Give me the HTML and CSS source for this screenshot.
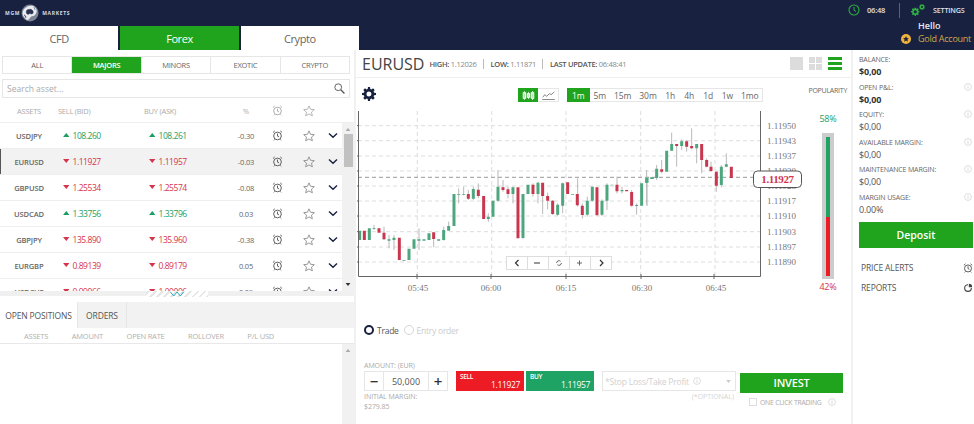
FILE: index.html
```html
<!DOCTYPE html>
<html lang="en">
<head>
<meta charset="utf-8">
<title>EURUSD</title>
<link rel="stylesheet" href="styles.css">
</head>
<body>
<svg class="sprite" aria-hidden="true">
  <symbol id="alarm" viewBox="0 0 14 14"><circle cx="7" cy="7.6" r="4.9" fill="none" stroke="currentColor" stroke-width="1.2"/><path d="M7 4.6v3.2l2 1M1.2 3.2 3.4 1.2M12.8 3.2 10.6 1.2M3.4 12l-1 1.2M10.6 12l1 1.2" fill="none" stroke="currentColor" stroke-width="1.2"/></symbol>
  <symbol id="star" viewBox="0 0 14 14"><path d="M7 1l1.8 4 4.4.4-3.3 2.9 1 4.3L7 10.4l-3.9 2.2 1-4.3L.8 5.4 5.2 5z" fill="none" stroke="currentColor" stroke-width="1"/></symbol>
  <symbol id="chev" viewBox="0 0 12 8"><path d="M1.2 1.5 6 6l4.8-4.5" fill="none" stroke="currentColor" stroke-width="1.7"/></symbol>
  <symbol id="up" viewBox="0 0 8 5"><path d="M4 0l4 5H0z" fill="currentColor"/></symbol>
  <symbol id="down" viewBox="0 0 8 5"><path d="M4 5 8 0H0z" fill="currentColor"/></symbol>
  <symbol id="info" viewBox="0 0 10 10"><circle cx="5" cy="5" r="4.3" fill="none" stroke="currentColor" stroke-width=".8"/><path d="M5 4.3v3M5 2.4v1" stroke="currentColor" stroke-width="1"/></symbol>
  <symbol id="gear" viewBox="0 0 14 14"><path d="M6 0h2l.3 1.9 1.2.5L11 1.3l1.7 1.7-1.1 1.5.5 1.2L14 6v2l-1.9.3-.5 1.2 1.1 1.5-1.7 1.7-1.5-1.1-1.2.5L8 14H6l-.3-1.9-1.2-.5L3 12.7 1.3 11l1.1-1.5-.5-1.2L0 8V6l1.9-.3.5-1.2L1.3 3 3 1.3l1.5 1.1 1.2-.5zM7 4.500a2.500 2.500 0 1 0 0 5 2.500 2.500 0 0 0 0-5z" fill="currentColor" fill-rule="evenodd"/></symbol>
</svg>

<header class="top">
  <div class="brand-col">
    <div class="logo">
      <span class="logo-word">MGM</span>
      <svg class="logo-globe" viewBox="0 0 18 18"><circle cx="9" cy="9" r="8.500" fill="#7d8496"/><path d="M3 5c3-3 6-4 9-3 4 2 5 6 2 9-2 2-3 0-5 3-2 3-4 2-5 0-3-3-3-6-1-9z" fill="#e9ebef"/><path d="M6 6c2-1 5-1 6 1 1 3-2 4-3 2-1 2-2 1-3 1-1-1-1-3 0-4zM3 11c1 0 2 1 2 3M13 3l1 3" fill="#2b3350" stroke="#2b3350" stroke-width=".5"/></svg>
      <span class="logo-word">MARKETS</span>
    </div>
    <nav class="market-tabs">
      <a class="market-tab">CFD</a>
      <a class="market-tab is-on">Forex</a>
      <a class="market-tab">Crypto</a>
    </nav>
  </div>
  <div class="account">
    <div class="status">
      <svg class="clock" viewBox="0 0 12 12"><circle cx="6" cy="6" r="5" fill="none" stroke="currentColor" stroke-width="1.100"/><path d="M6 3v3.200l2 1.200" fill="none" stroke="currentColor" stroke-width="1"/></svg>
      <span class="time">06:48</span>
      <span class="divider"></span>
      <svg class="gears" viewBox="0 0 14 12"><use href="#gear" x="0" y="3.400" width="8.600" height="8.600"/><use href="#gear" x="8" y="0" width="6" height="6"/></svg>
      <span class="settings">SETTINGS</span>
    </div>
    <div class="hello">Hello</div>
    <div class="gold">
      <svg class="gold-icon" viewBox="0 0 10 10"><circle cx="5" cy="5" r="5" fill="#f0b43c"/><path d="M5 2l.9 2 2.100.2-1.600 1.400.5 2.100L5 6.600 3.100 7.700l.5-2.100L2 4.200 4.100 4z" fill="#18213f"/></svg>
      <span>Gold Account</span>
    </div>
  </div>
</header>

<main class="desk">
  <section class="assets">
    <div class="filters">
      <a class="filter">ALL</a>
      <a class="filter is-on">MAJORS</a>
      <a class="filter">MINORS</a>
      <a class="filter">EXOTIC</a>
      <a class="filter">CRYPTO</a>
    </div>
    <div class="search">
      <span>Search asset...</span>
      <svg class="search-icon" viewBox="0 0 12 12"><circle cx="4.600" cy="4.600" r="3.700" fill="none" stroke="currentColor"/><path d="M7.400 7.400 11.400 11.400" stroke="currentColor" stroke-width="1.400"/></svg>
    </div>
    <div class="grid-row grid-head">
      <span class="c-sym">ASSETS</span>
      <span>SELL (BID)</span>
      <span>BUY (ASK)</span>
      <span class="c-mid">%</span>
      <svg class="ico-alarm dim"><use href="#alarm"/></svg>
      <svg class="ico-star dim"><use href="#star"/></svg>
    </div>
    <div class="list-wrap">
      <div class="list">
        <div class="grid-row asset"><b class="c-sym">USDJPY</b><span class="px up"><svg class="tri"><use href="#up"/></svg>108.260</span><span class="px up"><svg class="tri"><use href="#up"/></svg>108.261</span><span class="c-mid">-0.30</span><svg class="ico-alarm"><use href="#alarm"/></svg><svg class="ico-star"><use href="#star"/></svg><svg class="ico-chev"><use href="#chev"/></svg></div>
        <div class="grid-row asset is-sel"><b class="c-sym">EURUSD</b><span class="px dn"><svg class="tri"><use href="#down"/></svg>1.11927</span><span class="px dn"><svg class="tri"><use href="#down"/></svg>1.11957</span><span class="c-mid">-0.03</span><svg class="ico-alarm"><use href="#alarm"/></svg><svg class="ico-star"><use href="#star"/></svg><svg class="ico-chev"><use href="#chev"/></svg></div>
        <div class="grid-row asset"><b class="c-sym">GBPUSD</b><span class="px dn"><svg class="tri"><use href="#down"/></svg>1.25534</span><span class="px dn"><svg class="tri"><use href="#down"/></svg>1.25574</span><span class="c-mid">-0.08</span><svg class="ico-alarm"><use href="#alarm"/></svg><svg class="ico-star"><use href="#star"/></svg><svg class="ico-chev"><use href="#chev"/></svg></div>
        <div class="grid-row asset"><b class="c-sym">USDCAD</b><span class="px up"><svg class="tri"><use href="#up"/></svg>1.33756</span><span class="px up"><svg class="tri"><use href="#up"/></svg>1.33796</span><span class="c-mid">0.03</span><svg class="ico-alarm"><use href="#alarm"/></svg><svg class="ico-star"><use href="#star"/></svg><svg class="ico-chev"><use href="#chev"/></svg></div>
        <div class="grid-row asset"><b class="c-sym">GBPJPY</b><span class="px dn"><svg class="tri"><use href="#down"/></svg>135.890</span><span class="px dn"><svg class="tri"><use href="#down"/></svg>135.960</span><span class="c-mid">-0.38</span><svg class="ico-alarm"><use href="#alarm"/></svg><svg class="ico-star"><use href="#star"/></svg><svg class="ico-chev"><use href="#chev"/></svg></div>
        <div class="grid-row asset"><b class="c-sym">EURGBP</b><span class="px dn"><svg class="tri"><use href="#down"/></svg>0.89139</span><span class="px dn"><svg class="tri"><use href="#down"/></svg>0.89179</span><span class="c-mid">0.05</span><svg class="ico-alarm"><use href="#alarm"/></svg><svg class="ico-star"><use href="#star"/></svg><svg class="ico-chev"><use href="#chev"/></svg></div>
        <div class="grid-row asset"><b class="c-sym">USDCHF</b><span class="px dn"><svg class="tri"><use href="#down"/></svg>0.99966</span><span class="px dn"><svg class="tri"><use href="#down"/></svg>1.00006</span><span class="c-mid">0.09</span><svg class="ico-alarm"><use href="#alarm"/></svg><svg class="ico-star"><use href="#star"/></svg><svg class="ico-chev"><use href="#chev"/></svg></div>
      </div>
      <div class="scroll">
        <svg class="sc-arrow"><use href="#up"/></svg>
        <span class="thumb"></span>
        <svg class="sc-arrow sc-end"><use href="#down"/></svg>
      </div>
    </div>
    <div class="splitter">
      <span class="handle"><svg class="handle-icon" viewBox="0 0 14 6"><path d="M.5 1 3.700 5 7 1l3.300 4L13.500 1" fill="none" stroke="currentColor" stroke-width="1"/></svg></span>
    </div>
    <div class="pos-tabs">
      <a class="pos-tab is-on">OPEN POSITIONS</a>
      <a class="pos-tab">ORDERS</a>
    </div>
    <div class="pos-head">
      <span>ASSETS</span><span>AMOUNT</span><span>OPEN RATE</span><span>ROLLOVER</span><span>P/L USD</span>
    </div>
    <div class="pos-body">
      <div class="pos-empty"></div>
      <div class="scroll"><svg class="sc-arrow"><use href="#up"/></svg></div>
    </div>
  </section>

  <section class="center">
    <div class="title-bar">
      <h1 class="pair">EURUSD</h1>
      <span class="quote"><b>HIGH:</b> 1.12026</span>
      <span class="quote"><b>LOW:</b> 1.11871</span>
      <span class="quote quote-last"><b>LAST UPDATE:</b> 06:48:41</span>
      <div class="views">
        <span class="view-one"></span>
        <span class="view-four"><i></i><i></i><i></i><i></i></span>
        <span class="view-list"><i></i><i></i><i></i></span>
      </div>
    </div>
    <div class="tool-bar">
      <svg class="chart-gear"><use href="#gear"/></svg>
      <div class="type-group">
        <span class="type is-on"><svg viewBox="0 0 14 10" class="type-ico"><path d="M2.500 0v10M7 1v8M11.500 0v10" stroke="currentColor" stroke-width=".8"/><path d="M1.200 2h2.600v6H1.200zM5.700 3h2.600v4H5.700zM10.200 2h2.600v6h-2.600z" fill="none" stroke="currentColor" stroke-width="1.200"/></svg></span>
        <span class="type"><svg viewBox="0 0 14 10" class="type-ico"><path d="M.5 7 3 4l2 2 3-3 2 1 3.500-3M0 9.500h14" fill="none" stroke="currentColor" stroke-width=".8"/></svg></span>
      </div>
      <div class="period-group">
        <span class="period is-on">1m</span><span class="period">5m</span><span class="period">15m</span><span class="period">30m</span><span class="period">1h</span><span class="period">4h</span><span class="period">1d</span><span class="period">1w</span><span class="period">1mo</span>
      </div>
      <span class="pop-title">POPULARITY</span>
    </div>
    <div class="chart-row">
      <svg class="chart" viewBox="357 108 449 186" width="449" height="186">
        <g class="grid-lines">
          <path d="M358 125.700H761M358 140.700H761M358 156H761M358 171H761M358 186H761M358 201H761M358 216H761M358 231.700H761M358 247H761M358 262H761M417.300 111V277M491.700 111V277M566 111V277M640.700 111V277M715 111V277"/>
        </g>
        <path class="price-line" d="M358 177.300H753"/>
        <g transform="translate(355 170) scale(.3333)">
          <path class="wick" d="M57 165V180M87 170V210M102 195V235M117 195V240M192 175V240M236 205V232M266 170V212M281 155V170M311 55V100M326 50V76M340 60V90M355 50V90M370 40V85M400 130V155M429 0V95M444 30V65M459 50V85M474 50V100M504 190V206M534 40V80M549 35V100M563 38V132M578 68V118M593 90V135M608 100V138M623 38V130M668 25V110M682 100V146M697 80V140M712 50V95M741 88V138M756 40V120M786 20V70M801 50V70M830 60V110M845 100V134M875 0V105"/>
          <path class="body-g" d="M14 182V210M43 175V210M57 175V177M102 208V212M117 203V210M147 270V272M162 236V270M177 208V236M192 208V212M207 208V212M222 190V210M251 208V212M266 180V210M281 168V182M297 72V168M311 72V74M326 72V74M355 57V86M400 140V147M414 92V140M429 50V92M474 52V72M504 72V204M519 44V72M549 38V72M608 104V134M623 40V107M653 72V74M697 92V134M712 50V92M741 92V134M756 44V92M771 44V46M801 60V64M845 105V108M860 40V107M875 25V38M890 22V26"/>
          <path class="body-r" d="M28 182V210M72 175V188M87 188V208M133 203V270M236 187V207M340 72V86M370 59V78M386 78V147M444 52V60M459 58V72M489 52V205M534 44V72M563 38V78M578 78V92M593 92V132M638 37V72M667 72V106M682 107V135M726 52V136M786 44V64M815 60V64M830 66V107"/>
        </g>
        <g transform="translate(640 50) scale(.3333)">
          <path class="wick" d="M21 380V468M50 345V390M65 330V370M95 248V302M110 282V350M125 268V300M140 270V305M155 235V298M170 282V340M185 282V370M200 325V352M213 335V365M229 365V425M244 345V412M259 310V352"/>
          <path class="body-g" d="M21 383V398M37 383V387M50 356V384M80 302V365M95 282V302M125 274V288M170 282V295M244 350V405M259 343V350"/>
          <path class="body-r" d="M65 358V365M110 282V288M140 274V290M155 288V295M185 282V330M200 330V350M213 350V363M229 365V407M274 350V384"/>
        </g>
        <path class="axis" d="M358.500 111V276.500H760.500V111"/>
        <path class="tick" d="M417 274V279M491 274V279M566 274V279M641 274V279M714 274V279M356 125.700H359M356 140.700H359M356 156H359M356 171H359M356 186H359M356 201H359M356 216H359M356 231.700H359M356 247H359M356 262H359"/>
        <g class="y-labels">
          <text x="767" y="129">1.11950</text><text x="767" y="144">1.11943</text><text x="767" y="159">1.11937</text><text x="767" y="174">1.11930</text><text x="767" y="189">1.11923</text><text x="767" y="204">1.11917</text><text x="767" y="219">1.11910</text><text x="767" y="235">1.11903</text><text x="767" y="250">1.11897</text><text x="767" y="265">1.11890</text>
        </g>
        <g class="x-labels">
          <text x="418" y="291">05:45</text><text x="491" y="291">06:00</text><text x="566" y="291">06:15</text><text x="642" y="291">06:30</text><text x="716" y="291">06:45</text>
        </g>
        <rect class="nav-box" x="506.500" y="256.500" width="105" height="13"/>
        <path class="nav-sep" d="M527.500 257V269M548.500 257V269M569.500 257V269M590.500 257V269"/>
        <path class="nav-ico" d="M518.500 260l-3 3 3 3M534 263h6M600 260l3 3-3 3"/>
        <path class="nav-thin" d="M577 263h5M579.500 260.500v5M556.600 263a2.400 2.400 0 0 1 4-1.700M561.400 263a2.400 2.400 0 0 1-4 1.700"/>
        <rect class="price-tag" x="753.500" y="171" width="48" height="16.500" rx="4"/>
        <text class="price-text" x="777.500" y="183">1.11927</text>
      </svg>
      <div class="popularity">
        <span class="pop-num up">58%</span>
        <div class="pop-bar"><span class="pop-g"></span><span class="pop-r"></span></div>
        <span class="pop-num dn">42%</span>
      </div>
    </div>
    <div class="order-type">
      <span class="radio is-on"></span><span class="radio-label">Trade</span>
      <span class="radio"></span><span class="radio-label off">Entry order</span>
    </div>
    <div class="ticket">
      <div class="t-amount">
        <label class="t-label">AMOUNT: (EUR)</label>
        <div class="stepper"><span class="step">&minus;</span><span class="step-val">50,000</span><span class="step">+</span></div>
        <div class="t-label t-margin">INITIAL MARGIN:<br>$279.85</div>
      </div>
      <div class="quote-btn sell"><b>SELL</b><span>1.11927</span></div>
      <div class="quote-btn buy"><b>BUY</b><span>1.11957</span></div>
      <div class="t-stop">
        <div class="stop-box"><span>*Stop Loss/Take Profit</span><svg class="stop-info"><use href="#info"/></svg><svg class="stop-caret"><use href="#down"/></svg></div>
        <div class="t-opt">(*OPTIONAL)</div>
      </div>
      <div class="t-invest">
        <button class="invest">INVEST</button>
        <div class="oneclick"><span class="check"></span><span>ONE CLICK TRADING</span><svg class="stop-info"><use href="#info"/></svg></div>
      </div>
    </div>
  </section>

  <aside class="side">
    <div class="stat"><div><div class="stat-label">BALANCE:</div><div class="stat-val strong">$0,00</div></div></div>
    <div class="stat"><div><div class="stat-label">OPEN P&amp;L:</div><div class="stat-val strong">$0,00</div></div><svg class="stat-info"><use href="#info"/></svg></div>
    <div class="stat"><div><div class="stat-label">EQUITY:</div><div class="stat-val">$0,00</div></div><svg class="stat-info"><use href="#info"/></svg></div>
    <div class="stat"><div><div class="stat-label">AVAILABLE MARGIN:</div><div class="stat-val">$0,00</div></div><svg class="stat-info"><use href="#info"/></svg></div>
    <div class="stat"><div><div class="stat-label">MAINTENANCE MARGIN:</div><div class="stat-val">$0,00</div></div><svg class="stat-info"><use href="#info"/></svg></div>
    <div class="stat"><div><div class="stat-label">MARGIN USAGE:</div><div class="stat-val">0.00%</div></div><svg class="stat-info"><use href="#info"/></svg></div>
    <button class="deposit">Deposit</button>
    <div class="side-link"><span>PRICE ALERTS</span><svg class="side-ico"><use href="#alarm"/></svg></div>
    <div class="side-link"><span>REPORTS</span><svg class="side-ico" viewBox="0 0 12 12"><path d="M6 2a4 4 0 1 0 4 4" fill="none" stroke="currentColor" stroke-width="1.300"/><path d="M7 1a4 4 0 0 1 4 4H7z" fill="currentColor"/></svg></div>
  </aside>
</main>
</body>
</html>
```

FILE: styles.css
```css
* { box-sizing: border-box; }
html, body { margin: 0; height: 424px; overflow: hidden; }
body { width: 974px; font-family: "Open Sans", "Noto Sans", sans-serif; color: #555; background: #f1f1f1; display: flex; flex-direction: column; }
.sprite { display: none; }
svg { display: block; flex: none; }
b { font-weight: 600; }

/* header */
.top { height: 50px; background: #18213f; display: flex; justify-content: space-between; flex: none; }
.brand-col { width: 359px; display: flex; flex-direction: column; }
.logo { height: 26px; display: flex; align-items: center; padding-left: 5px; gap: 1px; }
.logo-word { color: #d9dce3; font-size: 5px; font-weight: 700; letter-spacing: .7px; }
.logo-globe { width: 18px; height: 18px; margin-right: 2px; }
.market-tabs { height: 24px; display: flex; gap: 2px; }
.market-tab { flex: 1; background: #fff; color: #666; font-size: 11px; letter-spacing: -.4px; display: flex; align-items: center; justify-content: center; }
.market-tab.is-on { background: #20a41d; color: #fff; }

.account { width: 126px; color: #fff; }
.status { height: 20px; display: flex; align-items: center; }
.clock { width: 12px; height: 12px; color: #2fae43; }
.time { font-size: 7.500px; font-weight: 600; margin-left: 7px; width: 25px; color: #dfe2e8; letter-spacing: -.2px; }
.divider { width: 1px; height: 15px; background: #5a6178; margin-left: 7px; }
.gears { width: 14px; height: 12px; margin-left: 11px; color: #2fae43; }
.settings { font-size: 7.200px; font-weight: 600; margin-left: 8px; color: #dfe2e8; letter-spacing: -.2px; }
.hello { font-size: 9px; font-weight: 600; line-height: 12px; padding-left: 70px; color: #e8eaee; }
.gold { display: flex; align-items: center; padding-left: 53px; margin-top: 1px; font-size: 9px; color: #d6a64a; letter-spacing: -.25px; white-space: nowrap; line-height: 12px; }
.gold-icon { width: 10px; height: 10px; margin-right: 7px; }

/* desk */
.desk { flex: 1; display: flex; min-height: 0; }

/* left */
.assets { width: 354px; background: #fff; display: flex; flex-direction: column; flex: none; margin-right: 2px; }
.filters { display: flex; height: 18px; margin: 6px 4px 0 2px; border: 1px solid #e6e6e6; }
.filter { flex: 1; font-size: 7.500px; letter-spacing: -.25px; color: #666; display: flex; align-items: center; justify-content: center; border-right: 1px solid #e6e6e6; }
.filter:last-child { border-right: 0; }
.filter.is-on { background: #20a41d; color: #fff; font-weight: 600; }
.search { height: 19px; margin: 5px 4px 0 2px; border: 1px solid #e6e6e6; display: flex; align-items: center; justify-content: space-between; padding: 0 4px; font-size: 8.500px; color: #aaa; }
.search-icon { width: 11px; height: 11px; color: #555; }

.grid-row { display: grid; grid-template-columns: 58px 86px 88px 28px 34px 30px 18px; align-items: center; justify-items: center; }
.grid-row > span:nth-child(2), .grid-row > span:nth-child(3) { justify-self: start; }
.grid-head { height: 24px; font-size: 7.500px; letter-spacing: -.25px; color: #aaa; padding-top: 1px; }
.c-sym { justify-self: center; }
.c-mid { justify-self: center; }
.ico-alarm { width: 11px; height: 11px; color: #555; }
.ico-alarm.dim { color: #aaa; }
.ico-star { width: 12px; height: 12px; color: #888; }
.ico-star.dim { color: #aaa; }
.ico-chev { width: 10px; height: 7px; color: #18213f; }

.list-wrap { height: 169px; display: flex; overflow: hidden; flex: none; border-top: 1px solid #eee; }
.list { width: 342px; }
.asset { height: 26px; border-bottom: 1px solid #eee; font-size: 7.500px; color: #666; letter-spacing: -.15px; }
.asset > b { font-size: 7.600px; color: #666; }
.asset.is-sel { background: #f2f2f2; box-shadow: inset 1px 0 0 #555; }
.px { display: flex; align-items: center; font-size: 8.500px; letter-spacing: -.45px; padding-left: 5px; }
.px .tri { width: 6.500px; height: 4px; margin: -2px 3px 0 0; }
.up { color: #1c9e63; }
.dn { color: #d6344b; }
.scroll { width: 12px; background: #f1f1f1; display: flex; flex-direction: column; align-items: center; padding-top: 5px; }
.sc-arrow { width: 6px; height: 3px; color: #aaa; }
.thumb { width: 9px; height: 33px; background: #c1c1c1; margin-top: 3px; }
.sc-end { margin-top: auto; margin-bottom: 5px; color: #333; }

.splitter { height: 11px; flex: none; position: relative; background: linear-gradient(#f0f0f0 0 5px, #fff 5px); }
.handle { position: absolute; left: 146px; top: 0; width: 62px; height: 6px; background: repeating-linear-gradient(-45deg, #e6e6e6 0 2px, #fff 2px 5px); display: flex; justify-content: center; }
.handle-icon { width: 14px; height: 6px; color: #2aa9b8; }
.pos-tabs { height: 26px; background: #f2f2f2; display: flex; flex: none; }
.pos-tab { font-size: 8.500px; letter-spacing: -.15px; color: #555; display: flex; align-items: center; justify-content: center; border-right: 1px solid #e6e6e6; width: 49px; }
.pos-tab.is-on { background: #fff; width: 78px; }
.pos-head { height: 16px; display: flex; gap: 23.500px; padding-left: 24px; align-items: center; font-size: 7.500px; letter-spacing: -.2px; color: #b0b0b0; border-bottom: 1px solid #e8e8e8; flex: none; }
.pos-body { flex: 1; display: flex; }
.pos-empty { width: 342px; }

/* center */
.center { width: 495px; background: #fff; flex: none; display: flex; flex-direction: column; }
.title-bar { height: 28px; border-bottom: 1px solid #eee; display: flex; align-items: center; padding-left: 6px; }
.pair { margin: 0 5px 0 0; font-size: 16px; font-weight: 400; color: #444; letter-spacing: 0; line-height: 1; }
.quote { font-size: 7.500px; color: #888; letter-spacing: -.28px; padding-right: 6px; margin-right: 7px; border-right: 1px solid #bbb; line-height: 10px; }
.quote b { color: #555; }
.quote-last { border-right: 0; }
.views { margin-left: auto; display: flex; align-items: center; gap: 6px; padding-right: 9px; }
.view-one { width: 13px; height: 13px; background: #dcdcdc; }
.view-four { width: 13px; height: 13px; display: grid; grid-template-columns: 6px 6px; gap: 1px; }
.view-four i { background: #dcdcdc; }
.view-list { width: 14px; height: 13px; display: flex; flex-direction: column; justify-content: space-between; }
.view-list i { height: 3px; background: #20a41d; }
.tool-bar { height: 30px; display: flex; align-items: flex-start; padding-top: 10px; flex: none; }
.chart-gear { width: 14px; height: 14px; color: #18213f; margin: -1px 0 0 6px; }
.type-group { display: flex; margin-left: 142px; height: 14px; border: 1px solid #e6e6e6; border-left: 0; flex: none; }
.type { width: 20px; display: flex; align-items: center; justify-content: center; color: #555; margin-top: -1px; height: 14px; }
.type.is-on { background: #20a41d; color: #fff; }
.type-ico { width: 13px; height: 9px; }
.period-group { display: flex; height: 14px; margin-left: 8px; border: 1px solid #e6e6e6; flex: none; }
.period { font-size: 8.500px; letter-spacing: -.1px; color: #666; padding: 0 4px; display: flex; align-items: center; min-width: 19px; justify-content: center; }
.period.is-on { background: #20a41d; color: #fff; margin: -1px 0 -1px -1px; padding: 0 5px; }
.pop-title { font-size: 7px; letter-spacing: -.25px; color: #666; margin: -2px 0 0 45px; white-space: nowrap; }

.chart-row { display: flex; height: 194px; flex: none; align-items: flex-start; }
.chart { margin-left: 1px; }
.grid-lines path { stroke: #dddddd; stroke-width: 1; stroke-dasharray: 4 3; fill: none; }
.price-line { stroke: #999; stroke-dasharray: 4 3; fill: none; }
.wick { stroke: #b9b9b9; stroke-width: 3; fill: none; }
.body-g { stroke: #4ea67f; stroke-width: 9; fill: none; }
.body-r { stroke: #c9374f; stroke-width: 9; fill: none; }
.axis, .tick { stroke: #666; fill: none; }
.y-labels text, .x-labels text { font-family: "Liberation Serif", serif; font-size: 9px; fill: #777; }
.x-labels text { text-anchor: middle; }
.nav-box { fill: #fff; stroke: #ddd; }
.nav-sep { stroke: #ddd; }
.nav-ico { stroke: #333; stroke-width: 1.200; fill: none; }
.nav-thin { stroke: #666; fill: none; }
.price-tag { fill: #fff; stroke: #555; }
.price-text { font-family: "Liberation Serif", serif; font-weight: 700; font-size: 11px; fill: #d6344b; text-anchor: middle; letter-spacing: -.4px; }
.popularity { width: 46px; margin-left: -1px; display: flex; flex-direction: column; align-items: center; font-size: 9px; padding-top: 4px; flex: none; }
.pop-num { line-height: 14px; letter-spacing: -.2px; flex: none; }
.pop-bar { width: 12px; height: 146px; margin: 7px 0 1px; background: #ccc; padding: 4px 4px 3px; display: flex; flex-direction: column; flex: none; }
.pop-g { height: 80px; background: #1ea365; }
.pop-r { flex: 1; background: #ed1c24; }

.order-type { display: flex; align-items: center; padding: 20px 0 0 8px; height: 36px; font-size: 8.500px; letter-spacing: -.25px; flex: none; }
.radio { width: 10px; height: 10px; border-radius: 50%; border: 1.500px solid #d5d5d5; flex: none; }
.radio.is-on { border: 2px solid #18213f; }
.radio-label { margin: 0 5px 0 3px; color: #555; }
.radio-label.off { color: #ccc; }
.ticket { display: flex; align-items: flex-start; padding: 23px 0 0 8px; }
.t-label { font-size: 7px; letter-spacing: -.05px; color: #aaa; line-height: 10px; display: block; }
.t-amount { width: 84px; margin-right: 8px; }
.t-margin { line-height: 9.500px; margin-top: 1px; }
.stepper { height: 20px; display: flex; border: 1px solid #e6e6e6; }
.step { width: 18px; font-size: 15px; font-weight: 600; color: #333; display: flex; align-items: center; justify-content: center; line-height: 1; }
.step-val { flex: 1; border: solid #e6e6e6; border-width: 0 1px; font-size: 9px; color: #555; display: flex; align-items: center; justify-content: center; }
.quote-btn { width: 68px; height: 20px; margin: 10px 2px 0 0; color: #fff; display: flex; flex-direction: column; padding: 2px 4px 0 4px; font-size: 8.500px; line-height: 9px; letter-spacing: -.35px; }
.quote-btn b { font-size: 6.500px; line-height: 7px; }
.quote-btn span { align-self: flex-end; }
.sell { background: #ed1c24; }
.buy { background: #1ea365; }
.t-stop { width: 134px; margin: 10px 0 0 6px; }
.stop-box { height: 20px; border: 1px solid #e6e6e6; display: flex; align-items: center; font-size: 8.500px; color: #d0d0d0; padding-left: 2px; letter-spacing: -.2px; }
.stop-info { width: 8px; height: 8px; margin-left: 4px; color: #ccc; }
.stop-caret { width: 5px; height: 3px; margin-left: auto; margin-right: 4px; color: #ccc; }
.t-opt { font-size: 7px; color: #d5d5d5; text-align: right; margin-top: 0; padding-right: 2px; line-height: 12px; }
.t-invest { width: 103px; margin: 9px 0 0 4px; }
.invest { width: 103px; height: 20px; background: #20a41d; border: 0; color: #fff; font: 600 11px "Open Sans", sans-serif; letter-spacing: -.2px; padding: 0; }
.oneclick { display: flex; align-items: center; font-size: 6.800px; letter-spacing: -.2px; color: #aaa; padding-left: 9px; margin-top: 5px; white-space: nowrap; }
.oneclick .stop-info { margin-left: 6px; }
.check { width: 8px; height: 8px; border: 1px solid #ddd; margin-right: 3px; flex: none; }

/* right */
.side { flex: 1; margin-left: 2px; background: #fff; padding: 5px 1px 0 6px; display: flex; flex-direction: column; }
.stat { height: 27.600px; display: flex; justify-content: space-between; align-items: flex-start; flex: none; }
.stat-label { font-size: 7px; letter-spacing: -.15px; color: #666; line-height: 10px; white-space: nowrap; }
.stat-val { font-size: 9px; color: #555; line-height: 13px; letter-spacing: -.2px; }
.stat-val.strong { font-weight: 700; color: #333; }
.stat-info { width: 8px; height: 8px; margin: 0 1px 0 0; color: #ccc; }
.deposit { height: 26px; background: #20a41d; border: 0; color: #fff; font: 600 10.500px "Open Sans", sans-serif; margin: 1px 0 10px; padding: 0; flex: none; }
.side-link { display: flex; justify-content: space-between; align-items: center; height: 20px; padding-left: 2px; font-size: 8.500px; letter-spacing: -.15px; color: #555; flex: none; }
.side-ico { width: 10px; height: 10px; color: #444; }
```
